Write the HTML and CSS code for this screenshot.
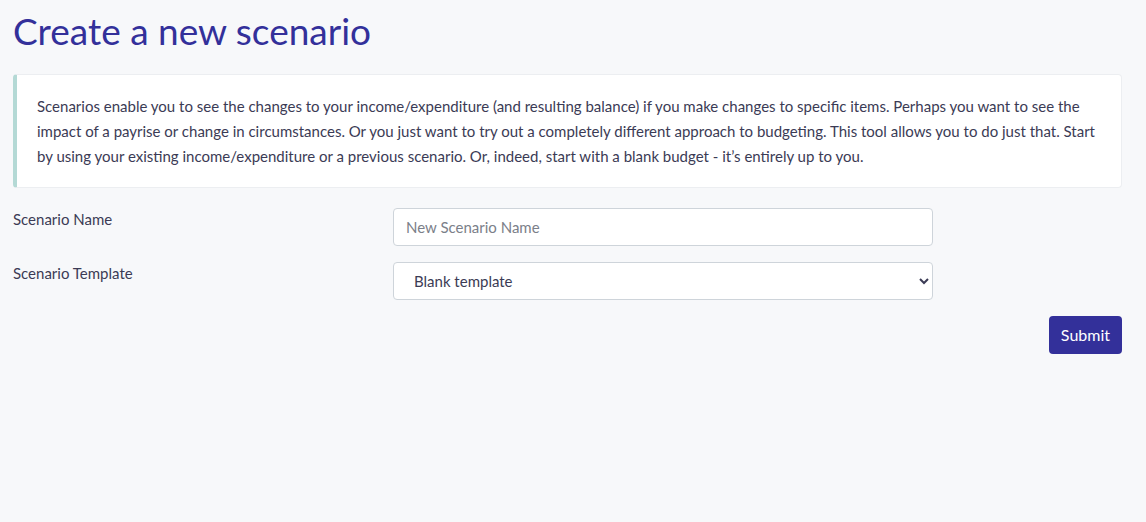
FILE: index.html
```html
<!DOCTYPE html>
<html lang="en">
<head>
  <meta charset="UTF-8">
  <title>Create a new scenario</title>
  <link rel="stylesheet" href="styles.css">
</head>
<body>

  <div class="page">
    <h1>Create a new scenario</h1>

    <div class="callout">
      <p>Scenarios enable you to see the changes to your income/expenditure (and resulting balance) if you make changes to specific items. Perhaps you want to see the impact of a payrise or change in circumstances. Or you just want to try out a completely different approach to budgeting. This tool allows you to do just that. Start by using your existing income/expenditure or a previous scenario. Or, indeed, start with a blank budget - it’s entirely up to you.</p>
    </div>

    <form class="scenario-form">
      <div class="form-row">
        <label for="name">Scenario Name</label>
        <input type="text" id="name" placeholder="New Scenario Name">
      </div>
      <div class="form-row">
        <label for="template">Scenario Template</label>
        <select id="template">
          <option>Blank template</option>
          <option>Current income/expenditure</option>
        </select>
      </div>
      <div class="actions">
        <button type="submit">Submit</button>
      </div>
    </form>
  </div>

</body>
</html>
```

FILE: styles.css
```css
body {
  margin: 0;
  background: #f7f8fa;
  font-family: Lato, 'Noto Sans', sans-serif;
  color: #3b3b55;
}

.page {
  padding: 0 24px 0 13px;
}

h1 {
  margin: 0;
  padding-top: 8px;
  font-size: 37px;
  font-weight: 400;
  line-height: 46px;
  color: #33309a;
}

.callout {
  margin-top: 20px;
  background: #fff;
  border: 1px solid #eceef1;
  border-left: 4px solid #b4d9d5;
  border-radius: 4px;
  padding: 19px 18px 18px 20px;
}

.callout p {
  margin: 0;
  font-size: 15px;
  line-height: 25px;
}

.scenario-form {
  margin-top: 20px;
}

.form-row {
  display: grid;
  grid-template-columns: 380px 540px;
  margin-bottom: 16px;
}

.form-row label {
  font-size: 15px;
  line-height: 22px;
}

input,
select {
  box-sizing: border-box;
  height: 38px;
  padding: 0 12px;
  background: #fff;
  border: 1px solid #ced4da;
  border-radius: 4px;
  font-family: inherit;
  font-size: 15px;
  color: #3b3b55;
}

input::placeholder {
  color: #7b8089;
}

select {
  padding-left: 16px;
}

.actions {
  display: flex;
  justify-content: flex-end;
}

button {
  height: 38px;
  padding: 0 12px 2px;
  background: #33309a;
  border: none;
  border-radius: 4px;
  color: #fff;
  font-family: inherit;
  font-size: 16px;
  cursor: pointer;
}
```
